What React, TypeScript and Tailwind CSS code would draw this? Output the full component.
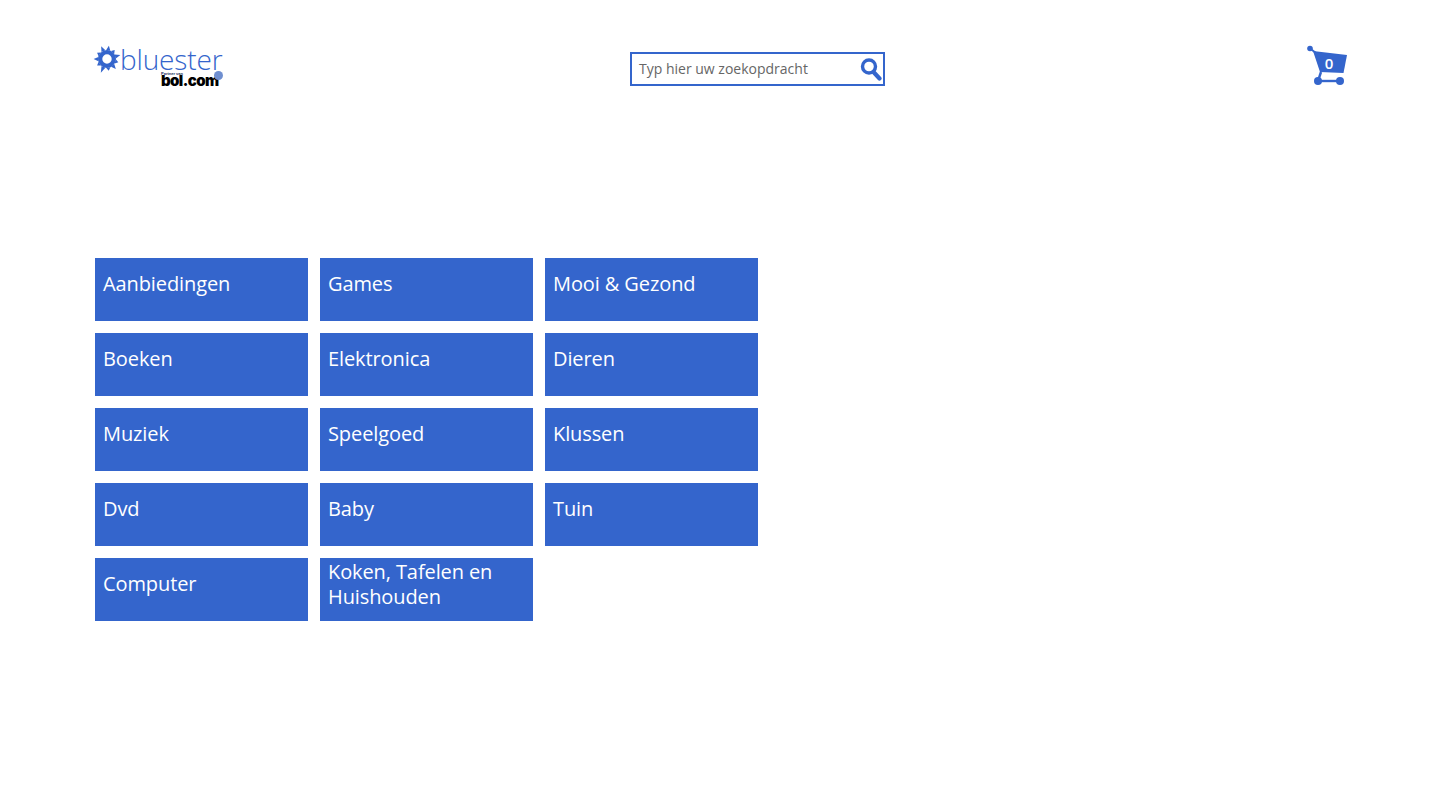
import React from 'react';

const categories = [
  'Aanbiedingen', 'Games', 'Mooi & Gezond',
  'Boeken', 'Elektronica', 'Dieren',
  'Muziek', 'Speelgoed', 'Klussen',
  'Dvd', 'Baby', 'Tuin',
  'Computer', 'Koken, Tafelen en Huishouden',
];

const spikes = [1.5, 3, 1, 3, 1.5, 3, 0, 3, 1.5, 3, 1];

const Sun = () => (
  <svg width="30" height="30" viewBox="0 0 28 28" className="shrink-0">
    <g fill="#3465cc">
      {spikes.map((s, i) => (
        <polygon key={i} points={`12,6 14,${s} 16,6`} transform={`rotate(${i * (360 / 11) + 8} 14 14)`} />
      ))}
    </g>
    <circle cx="14" cy="14" r="6.4" fill="none" stroke="#3465cc" strokeWidth="4" />
  </svg>
);

const Logo = () => (
  <div className="relative w-[130px] h-[42px]">
    <div className="flex items-center h-[28px]">
      <div className="-ml-[3px]"><Sun /></div>
      <span className="font-['Open_Sans'] text-[28px] leading-[28px] text-[#3465cc] tracking-[-0.15px] -ml-[2px] font-light">bluester</span>
    </div>
    <span className="absolute left-[66px] top-[27px] text-[4px] leading-[4px] font-bold text-[#1c2f5c] font-['Liberation_Sans']">Partner van</span>
    <span className="absolute left-[66px] top-[30px] text-[15px] leading-[11px] font-black text-black font-['Inter'] tracking-[-0.6px]">bol.com</span>
    <span className="absolute left-[119px] top-[26px] w-[9px] h-[9px] rounded-full bg-[#6f8fd0]" />
  </div>
);

const SearchIcon = () => (
  <svg width="22" height="24" viewBox="0 0 22 24" fill="none" stroke="#3465cc" strokeLinecap="round">
    <circle cx="9" cy="9.5" r="6.5" strokeWidth="3.4" />
    <path d="M13.5 15L19.5 21.5" strokeWidth="4.2" />
  </svg>
);

const Cart = () => (
  <div className="relative w-[42px] h-[42px]">
    <svg width="42" height="42" viewBox="0 0 42 42" fill="#3465cc">
      <circle cx="4" cy="3.5" r="2.8" />
      <path d="M4 3.5L10 8" stroke="#3465cc" strokeWidth="2" />
      <path d="M7 6L41 10L37.5 28L14 27Z" />
      <path d="M12 36H34" stroke="#3465cc" strokeWidth="2.4" />
      <path d="M15 27L12 36" stroke="#3465cc" strokeWidth="2.4" />
      <circle cx="12" cy="36" r="4" />
      <circle cx="34" cy="36" r="4" />
    </svg>
    <span className="absolute left-[18px] top-[9px] w-[10px] text-center text-[15px] leading-[18px] font-semibold text-white font-['Open_Sans']">0</span>
  </div>
);

export default function App() {
  return (
    <main className="w-full h-[810px] bg-white overflow-hidden font-['Open_Sans',sans-serif]">
      <header className="flex items-start justify-between pl-[95px] pr-[92px] pt-[45px]">
        <Logo />
        <div className="mt-[7px] ml-[-16px] flex items-center w-[255px] h-[34px] border-2 border-[#3465cc] bg-white pl-[7px] pr-[1px]">
          <span className="flex-1 text-[14px] text-[#666666] leading-[30px]">Typ hier uw zoekopdracht</span>
          <SearchIcon />
        </div>
        <Cart />
      </header>

      <section className="mt-[171px] ml-[95px] grid grid-cols-[repeat(3,213px)] auto-rows-[63px] gap-3">
        {categories.map((name) => (
          <div key={name} className="flex items-center bg-[#3465cc] px-2 pb-[12px] text-white text-[20px] tracking-[-0.1px] leading-[25px]">
            <span>{name}</span>
          </div>
        ))}
      </section>
    </main>
  );
}
